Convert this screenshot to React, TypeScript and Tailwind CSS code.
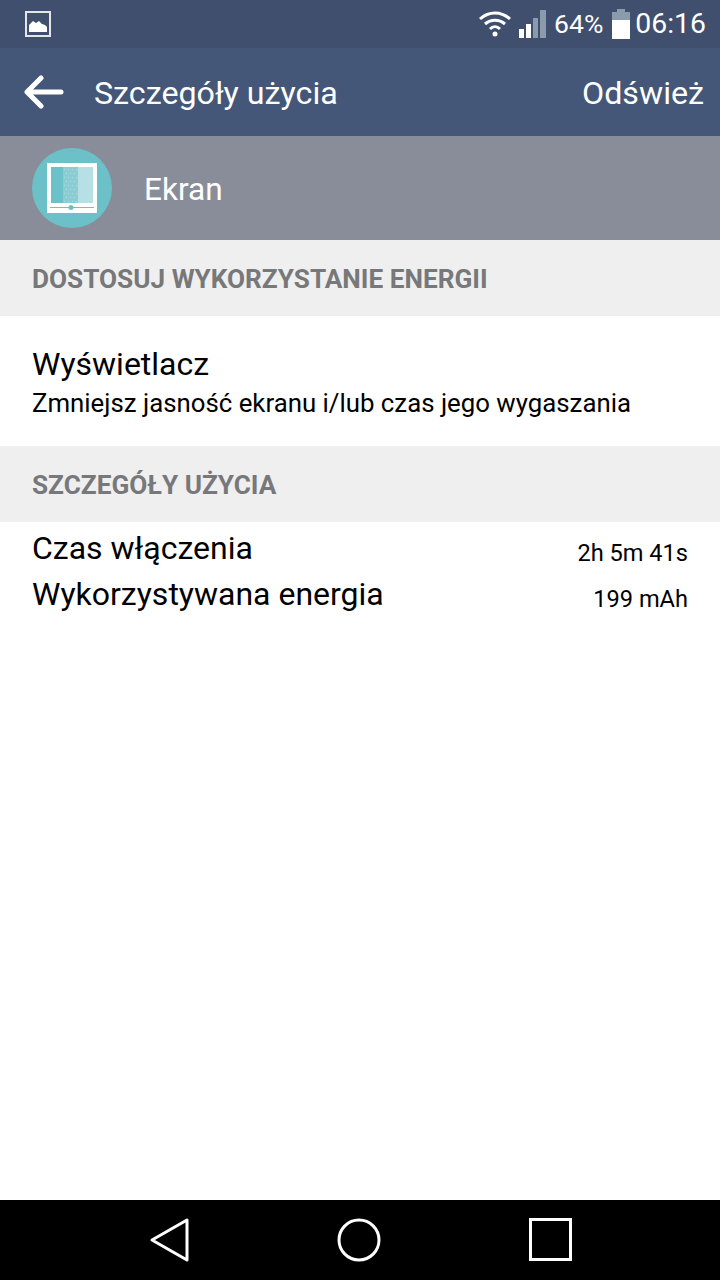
const font = { fontFamily: "Roboto, sans-serif" };

function SectionHeader({ children }: { children: string }) {
  return (
    <div className="h-[76px] bg-[#efefef] pl-8 flex items-center text-[26.2px] font-bold text-[#77787a]">
      <span className="mt-1">{children}</span>
    </div>
  );
}

function ScreenIcon() {
  const dots: { x: number; y: number }[] = [];
  for (let r = 0; r < 9; r++) {
    for (let c = 0; c < 4; c++) {
      dots.push({ x: 32 + c * 4 + (r % 2 ? 2 : 0), y: 21 + r * 4 });
    }
  }
  return (
    <svg width="80" height="80" viewBox="0 0 80 80" className="shrink-0">
      <circle cx="40" cy="40" r="40" fill="#6cc1c8" />
      <rect x="15" y="15" width="50" height="50" fill="#ffffff" />
      <rect x="19" y="19" width="12" height="36" fill="#6cc1c8" />
      <rect x="31" y="19" width="15" height="36" fill="#8acdd3" />
      <rect x="46" y="19" width="15" height="36" fill="#b6e0e4" />
      {dots.map((d, i) => (
        <rect key={i} x={d.x} y={d.y} width="1" height="1" fill="#b0dde1" />
      ))}
      <rect x="18" y="59" width="44" height="1" fill="#6cc1c8" />
      <circle cx="39" cy="59.5" r="2.5" fill="#6cc1c8" />
    </svg>
  );
}

function StatusBar() {
  return (
    <div className="h-12 bg-[#414f6f] flex items-center pl-[25px] pr-[14px] text-white">
      <svg width="26" height="26" viewBox="0 0 26 26">
        <rect x="1" y="1" width="24" height="24" fill="none" stroke="#e4e6ea" strokeWidth="2" />
        <path d="M4 21V14L8 10L11 12L14 10L17 13L20 14L22 16V21Z" fill="#ffffff" />
      </svg>
      <div className="ml-auto flex items-center">
        <svg width="34" height="26" viewBox="0 0 34 26">
          <path d="M2 8C11 0 23 0 32 8" fill="none" stroke="#fff" strokeWidth="3" />
          <path d="M7 13C13 8 21 8 27 13" fill="none" stroke="#fff" strokeWidth="3" />
          <path d="M12 18C15 15 19 15 22 18" fill="none" stroke="#fff" strokeWidth="3" />
          <circle cx="17" cy="23" r="2.5" fill="#fff" />
        </svg>
        <svg width="30" height="30" viewBox="0 0 30 30" className="ml-[6px] mr-[2px]">
          <rect x="1" y="20" width="5" height="9" fill="#fff" />
          <rect x="8" y="15" width="5" height="14" fill="#fff" />
          <rect x="15" y="9" width="5" height="20" fill="#8a9bab" />
          <rect x="22" y="1" width="6" height="28" fill="#8a9bab" />
        </svg>
        <span className="text-[26.5px] ml-[4px]">64%</span>
        <svg width="18" height="30" viewBox="0 0 18 30" className="ml-[9px]">
          <rect x="5" y="0" width="8" height="3" fill="#8a9bab" />
          <rect x="0" y="3" width="18" height="8" fill="#8a9bab" />
          <rect x="0" y="11" width="18" height="19" fill="#fff" />
        </svg>
        <span className="text-[28.4px] ml-[5px]">06:16</span>
      </div>
    </div>
  );
}

export default function App() {
  return (
    <div className="w-[720px] h-[1280px] flex flex-col bg-white text-black overflow-hidden" style={font}>
      <StatusBar />
      <div className="h-[88px] bg-[#445778] flex items-center text-white">
        <svg width="40" height="34" viewBox="0 0 40 34" className="ml-[24px]">
          <path d="M37 17H4M17 3L3 17L17 31" fill="none" stroke="#fff" strokeWidth="5" strokeLinecap="round" strokeLinejoin="round" />
        </svg>
        <span className="text-[32.2px] ml-[30px] mt-[2px]">Szczegóły użycia</span>
        <span className="text-[32.2px] ml-auto mr-4 mt-[2px]">Odśwież</span>
      </div>
      <div className="h-[104px] bg-[#888d99] flex items-center pl-8 text-white">
        <ScreenIcon />
        <span className="text-[31.6px] ml-[32px] mt-[3px]">Ekran</span>
      </div>
      <SectionHeader>DOSTOSUJ WYKORZYSTANIE ENERGII</SectionHeader>
      <div className="h-[130px] px-8 pt-[2px] flex flex-col justify-center">
        <div className="text-[32px] leading-[36px]">Wyświetlacz</div>
        <div className="text-[25.8px] leading-[32px] mt-[5px]">Zmniejsz jasność ekranu i/lub czas jego wygaszania</div>
      </div>
      <SectionHeader>SZCZEGÓŁY UŻYCIA</SectionHeader>
      <div className="px-8 pt-[3px] flex-1">
        <div className="h-[46px] flex items-center justify-between">
          <span className="text-[32px]">Czas włączenia</span>
          <span className="text-[23.6px] mt-3">2h 5m 41s</span>
        </div>
        <div className="h-[46px] flex items-center justify-between">
          <span className="text-[32px]">Wykorzystywana energia</span>
          <span className="text-[23.6px] mt-3">199 mAh</span>
        </div>
      </div>
      <div className="h-20 bg-black flex items-center">
        <svg width="720" height="80" viewBox="0 0 720 80" fill="none" stroke="#fff" strokeWidth="3">
          <path d="M187 20V60L152 40Z" strokeLinejoin="round" />
          <circle cx="359" cy="40" r="20" />
          <rect x="530.5" y="19.5" width="40" height="40" />
        </svg>
      </div>
    </div>
  );
}
